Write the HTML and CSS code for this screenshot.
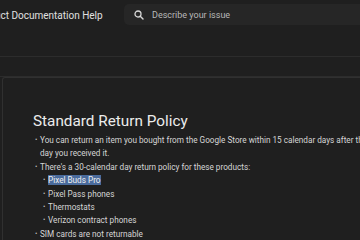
FILE: index.html
```html
<!DOCTYPE html>
<html>
<head>
<meta charset="utf-8">
<link rel="stylesheet" href="styles.css">
</head>
<body>
<header class="topbar">
  <div class="title">Product Documentation Help</div>
  <div class="search">
    <svg class="search-icon" width="12" height="12" viewBox="0 0 24 24"><circle cx="10" cy="10" r="6" fill="none" stroke="#d8d8d8" stroke-width="2.6"/><path d="M14.5 14.5 L20 20" stroke="#d8d8d8" stroke-width="2.8" stroke-linecap="round"/></svg>
    <span class="placeholder">Describe your issue</span>
  </div>
</header>
<div class="band"></div>
<main class="card">
  <h1 class="heading">Standard Return Policy</h1>
  <ul class="list">
    <li>You can return an item you bought from the Google Store within 15 calendar days after the day you received it.</li>
    <li>There's a 30-calendar day return policy for these products:
      <ul class="sublist">
        <li><span class="sel">Pixel Buds Pro</span></li>
        <li>Pixel Pass phones</li>
        <li>Thermostats</li>
        <li>Verizon contract phones</li>
      </ul>
    </li>
    <li>SIM cards are not returnable</li>
  </ul>
</main>
</body>
</html>
```
FILE: styles.css
```css
html, body {
  margin: 0;
  padding: 0;
  background: #1f1f1f;
  overflow: hidden;
  width: 360px;
  height: 240px;
  font-family: Roboto, "Noto Sans", sans-serif;
}
.topbar {
  height: 56px;
  border-bottom: 1px solid #2c2c2c;
  display: flex;
  align-items: flex-start;
  white-space: nowrap;
  overflow: hidden;
}
.title {
  margin-left: -26px;
  margin-top: 10px;
  font-size: 10px;
  line-height: 12px;
  color: #e0e0e0;
  width: 150px;
  flex-shrink: 0;
}
.search {
  margin-top: 4px;
  height: 21px;
  flex: 1;
  min-width: 260px;
  background: #262626;
  border-radius: 5px;
  display: flex;
  align-items: center;
  padding-left: 9px;
  gap: 7px;
}
.placeholder {
  font-size: 9px;
  color: #b8b8b8;
}
.band {
  height: 19px;
  border-bottom: 1px solid #2c2c2c;
}
.card {
  margin: 0 0 0 2px;
  height: 200px;
  border-left: 1px solid #303030;
  border-top: 1px solid #303030;
  border-top-left-radius: 3px;
  background: #1f1f1f;
  padding: 33px 0 0 30px;
  overflow: hidden;
}
.heading {
  margin: 0 0 3px 0;
  font-weight: 400;
  font-size: 15.3px;
  line-height: 20px;
  color: #ececec;
  white-space: nowrap;
}
.list {
  margin: 0;
  padding: 0 0 0 7px;
  list-style: none;
  font-size: 8.2px;
  line-height: 13.4px;
  color: #d6d6d6;
}
.list li {
  position: relative;
  width: 330px;
}
.list > li::before {
  content: "•";
  position: absolute;
  left: -5px;
  font-size: 7px;
  color: #bdbdbd;
}
.sublist {
  margin: 0;
  padding: 0 0 0 8px;
  list-style: none;
}
.sublist li::before {
  content: "•";
  position: absolute;
  left: -5px;
  font-size: 7px;
  color: #bdbdbd;
}
.sel {
  background: #4a6b9c;
  color: #f0f0f0;
}
```
